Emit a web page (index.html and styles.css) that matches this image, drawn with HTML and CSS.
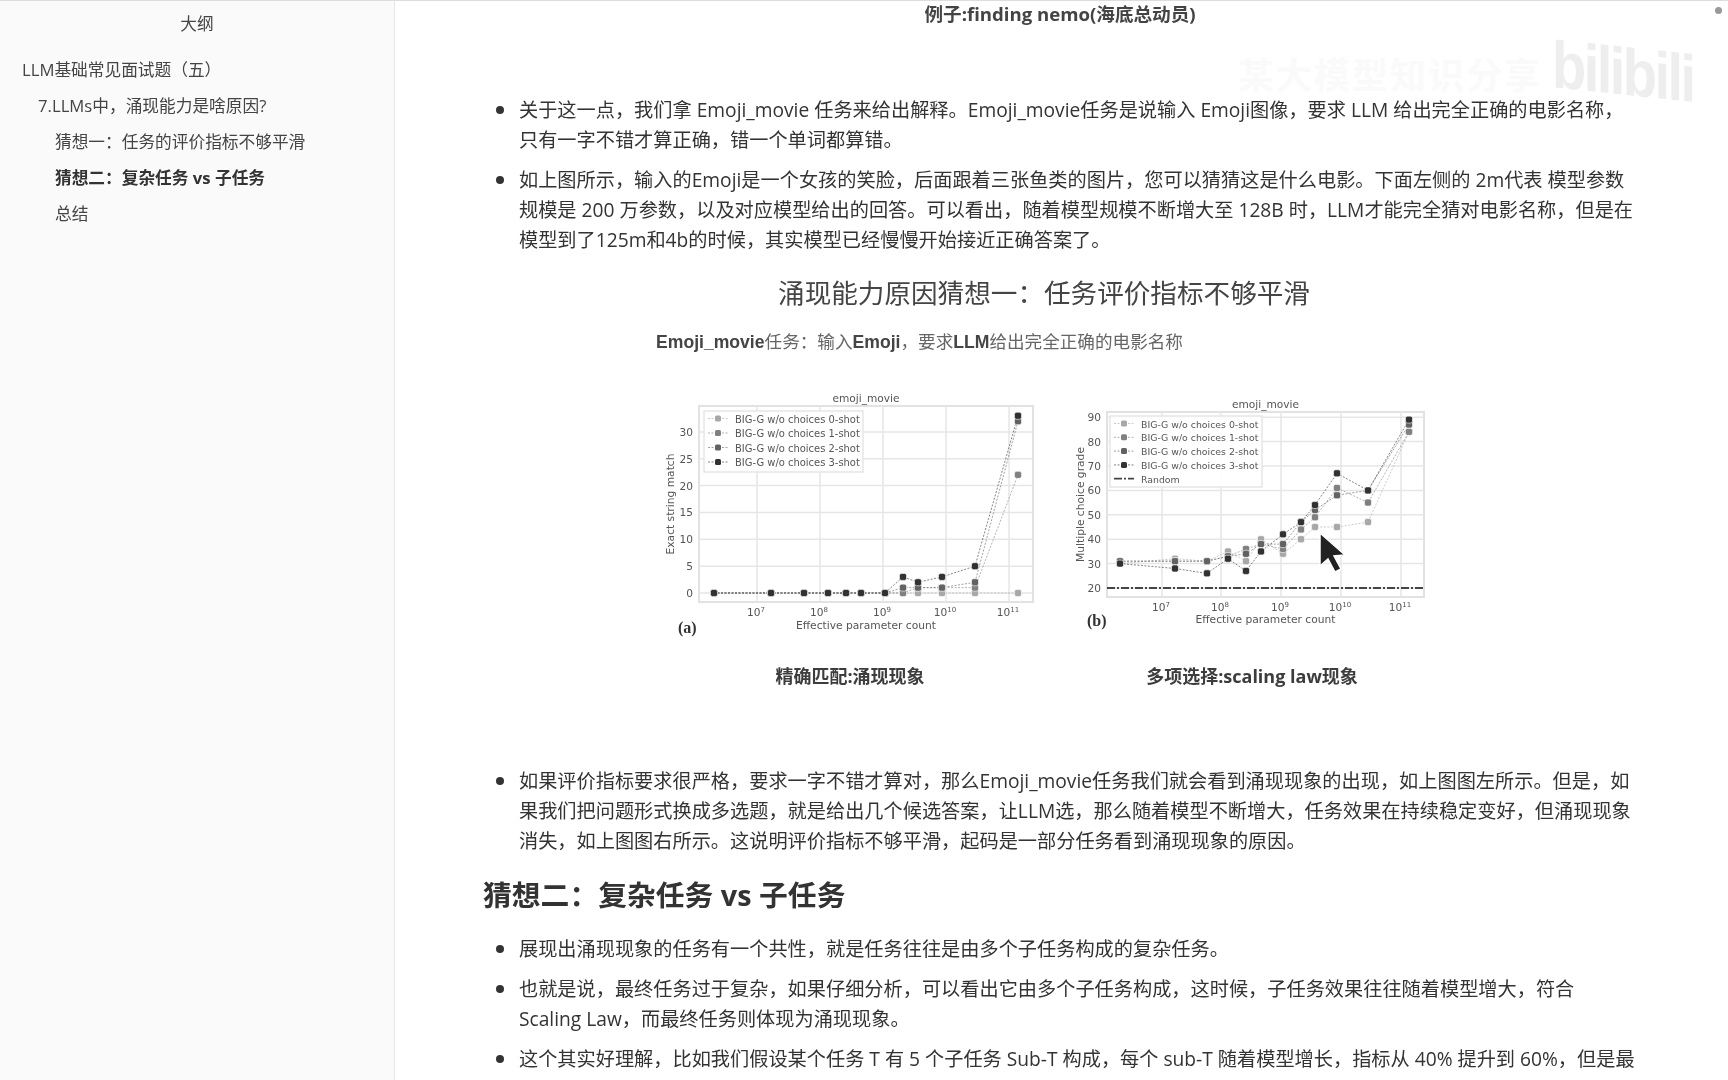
FILE: index.html
```html
<!DOCTYPE html>
<html lang="zh">
<head>
    <meta charset="UTF-8">
    <meta name="viewport" content="width=device-width, initial-scale=1.0">
    <link rel="stylesheet" href="styles.css">
    <title>LLM基础常见面试题（五）</title>
</head>
<body>
    <div id="app">
        <aside id="outline">
            <h2 class="outline-title">大纲</h2>
            <ul class="outline-list">
                <li class="lv1">LLM基础常见面试题（五）</li>
                <li class="lv2">7.LLMs中，涌现能力是啥原因?</li>
                <li class="lv3">猜想一：任务的评价指标不够平滑</li>
                <li class="lv3 current">猜想二：复杂任务 vs 子任务</li>
                <li class="lv3">总结</li>
            </ul>
        </aside>

        <main id="doc">
            <p class="caption">例子:finding nemo(海底总动员)</p>

            <ul class="bullets first">
                <li>关于这一点，我们拿 Emoji_movie 任务来给出解释。Emoji_movie任务是说输入 Emoji图像，要求 LLM 给出完全正确的电影名称，只有一字不错才算正确，错一个单词都算错。</li>
                <li>如上图所示，输入的Emoji是一个女孩的笑脸，后面跟着三张鱼类的图片，您可以猜猜这是什么电影。下面左侧的 2m代表 模型参数规模是 200 万参数，以及对应模型给出的回答。可以看出，随着模型规模不断增大至 128B 时，LLM才能完全猜对电影名称，但是在模型到了125m和4b的时候，其实模型已经慢慢开始接近正确答案了。</li>
            </ul>

            <div class="figure">
                <svg id="fig" class="fig-svg" width="900" height="440" viewBox="640 270 900 440"></svg>
            </div>

            <ul class="bullets">
                <li>如果评价指标要求很严格，要求一字不错才算对，那么Emoji_movie任务我们就会看到涌现现象的出现，如上图图左所示。但是，如果我们把问题形式换成多选题，就是给出几个候选答案，让LLM选，那么随着模型不断增大，任务效果在持续稳定变好，但涌现现象消失，如上图图右所示。这说明评价指标不够平滑，起码是一部分任务看到涌现现象的原因。</li>
            </ul>

            <h2 class="section">猜想二：复杂任务 vs 子任务</h2>

            <ul class="bullets">
                <li>展现出涌现现象的任务有一个共性，就是任务往往是由多个子任务构成的复杂任务。</li>
                <li>也就是说，最终任务过于复杂，如果仔细分析，可以看出它由多个子任务构成，这时候，子任务效果往往随着模型增大，符合 Scaling Law，而最终任务则体现为涌现现象。</li>
                <li>这个其实好理解，比如我们假设某个任务 T 有 5 个子任务 Sub-T 构成，每个 sub-T 随着模型增长，指标从 40% 提升到 60%，但是最</li>
            </ul>
        </main>

        <!-- video watermark -->
        <div class="wm-text">某大模型知识分享</div>
        <div class="wm-logo">bilibili</div>
        <span class="wm-dot"></span>
    </div>

    <script>
        const NS = "http://www.w3.org/2000/svg";
        const fig = document.getElementById("fig");

        function el(name, attrs, text) {
            const n = document.createElementNS(NS, name);
            for (const k in attrs) n.setAttribute(k, attrs[k]);
            if (text) n.textContent = text;
            fig.appendChild(n);
            return n;
        }

        // blur so the figure looks like the scaled slide in the video
        const defs = el("defs", {});
        defs.innerHTML = '<filter id="soft" x="-5%" y="-5%" width="110%" height="110%"><feGaussianBlur stdDeviation="0.6"/></filter>';
        const group = el("g", { filter: "url(#soft)" });
        function add(name, attrs, text) {
            const n = el(name, attrs, text);
            group.appendChild(n);
            return n;
        }
        function span(parent, text, cls) {
            const s = document.createElementNS(NS, "tspan");
            if (cls) s.setAttribute("class", cls);
            s.textContent = text;
            parent.appendChild(s);
            return s;
        }

        add("text", { x: 1044, y: 303, class: "t-title", "text-anchor": "middle" }, "涌现能力原因猜想一：任务评价指标不够平滑");
        const sub = add("text", { x: 656, y: 348, class: "t-sub" });
        span(sub, "Emoji_movie");
        span(sub, "任务：输入", "t-sub-cjk");
        span(sub, "Emoji");
        span(sub, "，要求", "t-sub-cjk");
        span(sub, "LLM");
        span(sub, "给出完全正确的电影名称", "t-sub-cjk");

        const shades = ["#a8a8a8", "#808080", "#626262", "#333333"];

        function drawChart(c) {
            const yPos = v => c.y0 + (v - c.yBase) * c.yStep;

            add("text", { x: (c.left + c.right) / 2, y: c.top - 4, class: "t-small", "text-anchor": "middle" }, "emoji_movie");
            add("rect", { x: c.left, y: c.top, width: c.right - c.left, height: c.bottom - c.top, class: "frame" });

            c.xTicks.forEach((x, i) => {
                add("line", { x1: x, x2: x, y1: c.top, y2: c.bottom, class: "grid" });
                const label = add("text", { x: x - 1, y: c.bottom + 14, class: "t-tick", "text-anchor": "middle" }, "10");
                const sup = span(label, String(7 + i), "t-sup");
                sup.setAttribute("dy", "-4");
            });
            c.yTicks.forEach(v => {
                const y = yPos(v);
                add("line", { x1: c.left, x2: c.right, y1: y, y2: y, class: "grid" });
                add("text", { x: c.left - 6, y: y + 4, class: "t-tick", "text-anchor": "end" }, String(v));
            });

            c.series.forEach((s, i) => {
                const pts = s.map((v, j) => c.xs[j] + "," + yPos(v)).join(" ");
                add("polyline", { points: pts, class: "series", stroke: shades[i] });
            });
            c.series.forEach((s, i) => {
                s.forEach((v, j) => {
                    add("rect", { x: c.xs[j] - 3.5, y: yPos(v) - 3.5, width: 7, height: 7, rx: 2, fill: shades[i], class: "marker" });
                });
            });

            if (c.random) {
                add("line", { x1: c.left, x2: c.right, y1: yPos(20), y2: yPos(20), class: "random" });
            }

            // legend
            add("rect", { x: c.legend.x, y: c.legend.y, width: c.legend.w, height: c.legend.h, class: "legend" });
            for (let i = 0; i < 4; i++) {
                const y = c.legend.y + 7.5 + i * c.legend.step;
                add("line", { x1: c.legend.x + 4, x2: c.legend.x + 24, y1: y, y2: y, class: "series", stroke: shades[i] });
                add("rect", { x: c.legend.x + 11, y: y - 3, width: 6, height: 6, rx: 1.5, fill: shades[i] });
                add("text", { x: c.legend.x + 31, y: y + 4, class: "t-legend", "font-size": c.legend.size }, "BIG-G w/o choices " + i + "-shot");
            }
            if (c.random) {
                const y = c.legend.y + 7.5 + 4 * c.legend.step;
                add("line", { x1: c.legend.x + 4, x2: c.legend.x + 24, y1: y, y2: y, class: "random" });
                add("text", { x: c.legend.x + 31, y: y + 4, class: "t-legend", "font-size": c.legend.size }, "Random");
            }

            add("text", { x: (c.left + c.right) / 2, y: c.bottom + c.axisGap, class: "t-axis", "text-anchor": "middle" }, "Effective parameter count");
            const mid = (c.top + c.bottom) / 2;
            add("text", { x: c.yLabel, y: mid, class: "t-axis", "text-anchor": "middle", transform: `rotate(-90 ${c.yLabel} ${mid})` }, c.yTitle);
            add("text", { x: c.tag.x, y: c.tag.y, class: "t-tag" }, c.tag.text);
        }

        drawChart({
            left: 699, right: 1033, top: 406, bottom: 602,
            y0: 593, yBase: 0, yStep: -5.37,
            yTicks: [0, 5, 10, 15, 20, 25, 30],
            xTicks: [757, 820, 883, 946, 1009],
            xs: [714, 771, 804, 828, 846, 861, 885, 903, 918, 942, 975, 1018],
            series: [
                [0, 0, 0, 0, 0, 0, 0, 0, 0, 0, 0, 0],
                [0, 0, 0, 0, 0, 0, 0, 0, 1, 1, 1, 22],
                [0, 0, 0, 0, 0, 0, 0, 1, 1, 1, 2, 32],
                [0, 0, 0, 0, 0, 0, 0, 3, 2, 3, 5, 33]
            ],
            legend: { x: 704, y: 411, w: 159, h: 61, step: 14.5, size: 9.95 },
            axisGap: 27,
            yLabel: 674, yTitle: "Exact string match",
            tag: { x: 678, y: 633, text: "(a)" }
        });

        drawChart({
            left: 1107, right: 1424, top: 412, bottom: 597,
            y0: 588, yBase: 20, yStep: -2.44,
            yTicks: [20, 30, 40, 50, 60, 70, 80, 90],
            xTicks: [1162, 1221, 1281, 1341, 1401],
            xs: [1120, 1175, 1207, 1228, 1246, 1261, 1283, 1301, 1315, 1337, 1368, 1409],
            series: [
                [30, 32, 31, 35, 31, 40, 34, 40, 45, 45, 47, 84],
                [31, 31, 31, 33, 36, 38, 36, 44, 49, 61, 55, 84],
                [31, 31, 31, 33, 34, 38, 38, 47, 52, 58, 60, 87],
                [30, 28, 26, 32, 27, 35, 42, 47, 54, 67, 60, 89]
            ],
            random: true,
            legend: { x: 1110, y: 416, w: 152, h: 71, step: 13.8, size: 9.35 },
            axisGap: 26,
            yLabel: 1084, yTitle: "Multiple choice grade",
            tag: { x: 1087, y: 626, text: "(b)" }
        });

        add("text", { x: 850, y: 683, class: "t-cap", "text-anchor": "middle" }, "精确匹配:涌现现象");
        add("text", { x: 1252, y: 683, class: "t-cap", "text-anchor": "middle" }, "多项选择:scaling law现象");

        // mouse pointer from the recording
        add("path", { d: "M1320 533 L1320 566 L1328 559 L1335 572 L1341 569 L1334 556 L1345 555 Z", class: "cursor" });
    </script>
</body>
</html>
```

FILE: styles.css
```css
* {
    box-sizing: border-box;
}

html, body {
    margin: 0;
    height: 100%;
    overflow: hidden;
}

body {
    font-family: "Open Sans", "Noto Sans CJK SC", sans-serif;
    color: #333;
    background: #fff;
}

#app {
    position: relative;
    display: flex;
    height: 1080px;
    border-top: 1px solid #ddd;
}

#outline {
    flex: 0 0 395px;
    background: #fafafa;
    border-right: 1px solid #e6e6e6;
    padding: 13px 0 0 22px;
    color: #444;
    filter: blur(0.25px);
}

.outline-title {
    margin: 0 0 18px -22px;
    font-size: 16.7px;
    font-weight: 400;
    line-height: 20px;
    text-align: center;
}

.outline-list {
    list-style: none;
    margin: 0;
    padding: 0;
    font-size: 16.7px;
}

.outline-list li {
    height: 36px;
    line-height: 36px;
}

.lv2 {
    padding-left: 16px;
}

.lv3 {
    padding-left: 33px;
}

.current {
    font-weight: 700;
    color: #333;
}

#doc {
    flex: 1;
    min-width: 0;
    padding: 0 92px 0 89px;
    font-size: 19.2px;
    line-height: 30px;
    filter: blur(0.25px);
}

.caption {
    margin: 0;
    height: 25px;
    line-height: 25px;
    text-align: center;
    font-size: 18.6px;
    font-weight: 700;
    color: #444;
}

.bullets {
    margin: 0;
    padding: 0 0 0 35px;
    list-style: none;
}

.bullets.first {
    margin-top: 69px;
}

.bullets li {
    position: relative;
    margin-bottom: 10px;
}

/* bigger dots than the default list marker */
.bullets li::before {
    content: "";
    position: absolute;
    left: -23px;
    top: 11px;
    width: 8px;
    height: 8px;
    border-radius: 50%;
    background: #333;
}

.figure {
    height: 501px;
    overflow: hidden;
}

.fig-svg {
    display: block;
    margin-left: 156px;
    margin-top: 5px;
}

.section {
    margin: 19px 0 19px -1px;
    font-size: 28.8px;
    line-height: 40px;
    font-weight: 700;
    color: #333;
}

.t-title {
    font-family: "Noto Sans CJK SC", sans-serif;
    font-size: 26.6px;
    fill: #444;
}

.t-sub {
    font-family: "Liberation Sans", "Noto Sans CJK SC", sans-serif;
    font-size: 17.6px;
    font-weight: 700;
    fill: #444;
}

.t-sub-cjk {
    font-weight: 400;
    fill: #666;
}

.t-small, .t-tick, .t-axis, .t-legend {
    font-family: "DejaVu Sans", sans-serif;
    fill: #555;
}

.t-small, .t-tick {
    font-size: 10.6px;
}

.t-sup {
    font-size: 7px;
}

.t-axis {
    font-size: 10.7px;
}

.t-tag {
    font-family: "Liberation Serif", serif;
    font-size: 16px;
    font-weight: 700;
    fill: #333;
}

.t-cap {
    font-family: "Open Sans", "Noto Sans CJK SC", sans-serif;
    font-size: 18px;
    font-weight: 700;
    fill: #3c3c3c;
}

.frame {
    fill: #fff;
    stroke: #e2e2e2;
    stroke-width: 2;
}

.grid {
    stroke: #e6e6e6;
    stroke-width: 1.5;
}

.series {
    fill: none;
    stroke-width: 1;
    stroke-dasharray: 2 1.5;
    stroke-opacity: 0.6;
}

.marker {
    stroke: #fff;
    stroke-width: 0.6;
}

.random {
    stroke: #444;
    stroke-width: 1.8;
    stroke-dasharray: 8 2 2 2;
}

.legend {
    fill: #fff;
    stroke: #e6e6e6;
    stroke-width: 1.5;
    fill-opacity: 0.9;
}

.cursor {
    fill: #222;
    stroke: #fff;
    stroke-width: 1.5;
}

.wm-text {
    position: absolute;
    left: 1238px;
    top: 50px;
    font-size: 36px;
    line-height: 44px;
    letter-spacing: 2px;
    color: #fafafa;
    font-family: "Noto Sans CJK SC", sans-serif;
    font-weight: 700;
}

.wm-logo {
    position: absolute;
    left: 1552px;
    top: 25px;
    font-family: "Liberation Sans", sans-serif;
    font-size: 66px;
    line-height: 76px;
    letter-spacing: -3px;
    font-weight: 700;
    color: #eeeeee;
    transform: skewY(6deg) scaleX(0.85);
    transform-origin: left top;
}

.wm-dot {
    position: absolute;
    left: 1715px;
    top: 6px;
    width: 7px;
    height: 7px;
    border-radius: 50%;
    background: #999;
}
```
